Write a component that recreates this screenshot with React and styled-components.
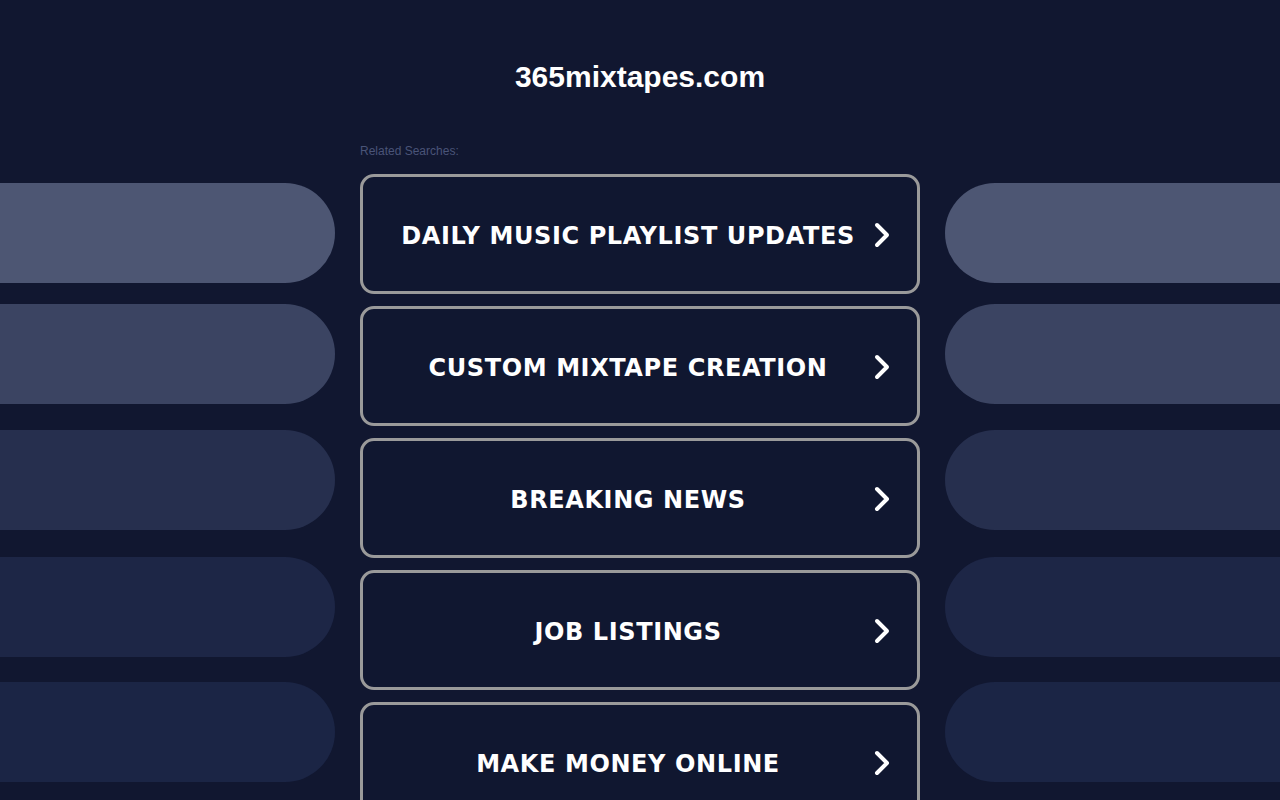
import React from 'react';
import styled, { createGlobalStyle } from 'styled-components';

const color = {
	page: '#111730',
	box: '#101730',
	border: '#9a9a9a',
	muted: '#4a5478',
	white: '#ffffff',
};

// background pills, with the space above each one
const pills = [
	{ bg: '#4d5673', space: 0 },
	{ bg: '#3b4462', space: 21 },
	{ bg: '#262f4e', space: 26 },
	{ bg: '#1d2646', space: 27 },
	{ bg: '#1b2545', space: 25 },
];

const links = [
	'Daily Music Playlist Updates',
	'Custom Mixtape Creation',
	'Breaking News',
	'Job Listings',
	'Make Money Online',
];

const Global = createGlobalStyle`
	html, body {
		margin: 0;
		padding: 0;
		background: ${color.page};
		height: 100%;
		overflow: hidden;
	}
	body {
		font-family: "Liberation Sans", Arial, sans-serif;
	}
`;

const C = {
	page: styled.div`
		display: grid;
		grid-template-columns: 335px 560px 335px;
		column-gap: 25px;
		width: 1280px;
		height: 800px;
		overflow: hidden;
	`,
	side: styled.div`
		display: flex;
		flex-direction: column;
		padding-top: 183px;
	`,
	pill: styled.div`
		height: 100px;
		flex-shrink: 0;
		margin-top: ${(p) => p.$space}px;
		background: ${(p) => p.$bg};
		border-radius: ${(p) => (p.$left ? '0 50px 50px 0' : '50px 0 0 50px')};
	`,
	main: styled.div`
		display: flex;
		flex-direction: column;
	`,
	title: styled.h1`
		margin: 0;
		padding-top: 59px;
		height: 36px;
		line-height: 36px;
		text-align: center;
		color: ${color.white};
		font-size: 30px;
		font-weight: bold;
	`,
	label: styled.p`
		margin: 0;
		margin-top: 49px;
		font-size: 12px;
		line-height: 14px;
		color: ${color.muted};
	`,
	list: styled.div`
		display: flex;
		flex-direction: column;
		gap: 12px;
		margin-top: 16px;
	`,
	link: styled.a`
		display: flex;
		align-items: center;
		height: 120px;
		flex-shrink: 0;
		box-sizing: border-box;
		padding: 4px 26px 0;
		border: 3px solid ${color.border};
		border-radius: 14px;
		background: ${color.box};
		text-decoration: none;
		cursor: pointer;
	`,
	text: styled.span`
		flex: 1;
		margin-right: 6px;
		text-align: center;
		color: ${color.white};
		font-family: "DejaVu Sans", Verdana, sans-serif;
		font-weight: bold;
		font-size: 24px;
		letter-spacing: 0.6px;
		text-transform: uppercase;
		white-space: nowrap;
	`,
	chevron: styled.svg`
		width: 18px;
		height: 26px;
		flex-shrink: 0;
		margin-top: -2px;
	`,
};

function Chevron() {
	return (
		<C.chevron viewBox="0 0 18 26" fill="none">
			<path d="M4 3 L14 13 L4 23" stroke={color.white} strokeWidth="4" strokeLinecap="round" strokeLinejoin="round" />
		</C.chevron>
	);
}

export default function App() {
	return (
		<>
			<Global />
			<C.page>
				<C.side>
					{pills.map((p) => (
						<C.pill key={p.bg} $bg={p.bg} $space={p.space} $left />
					))}
				</C.side>
				<C.main>
					<C.title>365mixtapes.com</C.title>
					<C.label>Related Searches:</C.label>
					<C.list>
						{links.map((text) => (
							<C.link key={text}>
								<C.text>{text}</C.text>
								<Chevron />
							</C.link>
						))}
					</C.list>
				</C.main>
				<C.side>
					{pills.map((p) => (
						<C.pill key={p.bg} $bg={p.bg} $space={p.space} />
					))}
				</C.side>
			</C.page>
		</>
	);
}
